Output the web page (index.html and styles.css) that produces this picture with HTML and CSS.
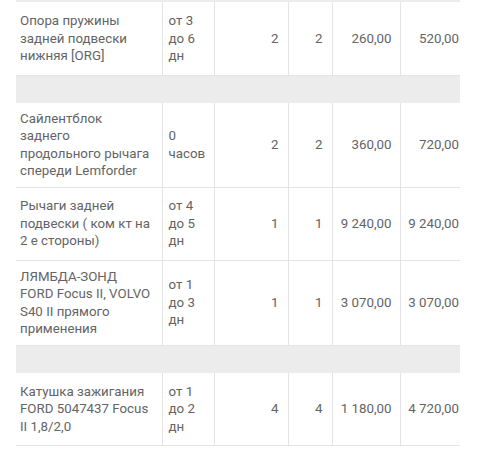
FILE: index.html
```html
<!DOCTYPE html>
<html lang="ru">
<head>
<meta charset="utf-8">
<title>Корзина</title>
<link rel="stylesheet" href="styles.css">
</head>
<body>
<div class="wrap">
<table class="parts">
  <colgroup>
    <col class="c-name"><col class="c-term"><col class="c-qty"><col class="c-qty2"><col class="c-price"><col class="c-sum">
  </colgroup>
  <tbody>
    <tr class="sep sep-top"><td colspan="6"></td></tr>
    <tr class="item">
      <td class="name">Опора пружины<br>задней подвески<br>нижняя [ORG]</td>
      <td class="term">от 3<br>до 6<br>дн</td>
      <td class="num">2</td>
      <td class="num">2</td>
      <td class="num price">260,00</td>
      <td class="num last">520,00</td>
    </tr>
    <tr class="sep"><td colspan="6"></td></tr>
    <tr class="item">
      <td class="name">Сайлентблок<br>заднего<br>продольного рычага<br>спереди Lemforder</td>
      <td class="term">0<br>часов</td>
      <td class="num">2</td>
      <td class="num">2</td>
      <td class="num price">360,00</td>
      <td class="num last">720,00</td>
    </tr>
    <tr class="item">
      <td class="name">Рычаги задней<br>подвески ( ком кт на<br>2 е стороны)</td>
      <td class="term">от 4<br>до 5<br>дн</td>
      <td class="num">1</td>
      <td class="num">1</td>
      <td class="num price">9 240,00</td>
      <td class="num last">9 240,00</td>
    </tr>
    <tr class="item">
      <td class="name">ЛЯМБДА-ЗОНД<br>FORD Focus II, VOLVO<br>S40 II прямого<br>применения</td>
      <td class="term">от 1<br>до 3<br>дн</td>
      <td class="num">1</td>
      <td class="num">1</td>
      <td class="num price">3 070,00</td>
      <td class="num last">3 070,00</td>
    </tr>
    <tr class="sep"><td colspan="6"></td></tr>
    <tr class="item">
      <td class="name">Катушка зажигания<br>FORD 5047437 Focus<br>II 1,8/2,0</td>
      <td class="term">от 1<br>до 2<br>дн</td>
      <td class="num">4</td>
      <td class="num">4</td>
      <td class="num price">1 180,00</td>
      <td class="num last">4 720,00</td>
    </tr>
  </tbody>
</table>
</div>
</body>
</html>
```

FILE: styles.css
```css
html, body {
  margin: 0;
  padding: 0;
  background: #ffffff;
}

body {
  font-family: Roboto, "Liberation Sans", Arial, sans-serif;
  font-size: 13.3px;
  line-height: 17.5px;
  color: #646464;
}

.wrap {
  padding: 0 20px 0 16px;
}

.parts {
  width: 444px;
  table-layout: fixed;
  border-collapse: collapse;
  border-spacing: 0;
}

.c-name { width: 146px; }
.c-term { width: 52px; }
.c-qty { width: 74px; }
.c-qty2 { width: 44px; }
.c-price { width: 68px; }
.c-sum { width: 60px; }

.parts td {
  padding: 7px 9px 7px 6px;
  vertical-align: middle;
  white-space: nowrap;
}

.item {
  height: 73px;
}

.item td {
  border-bottom: 1px solid #e4e4e4;
  border-left: 1px solid #e4e4e4;
}

.item td.name {
  border-left: none;
  padding-left: 4px;
}

.num {
  text-align: right;
}

.item td.price {
  padding-right: 8px;
}

.item td.last {
  padding-right: 1px;
}

.sep td {
  background: #ececec;
  height: 27px;
  padding: 0;
}

.sep-top td {
  height: 2px;
}
```
